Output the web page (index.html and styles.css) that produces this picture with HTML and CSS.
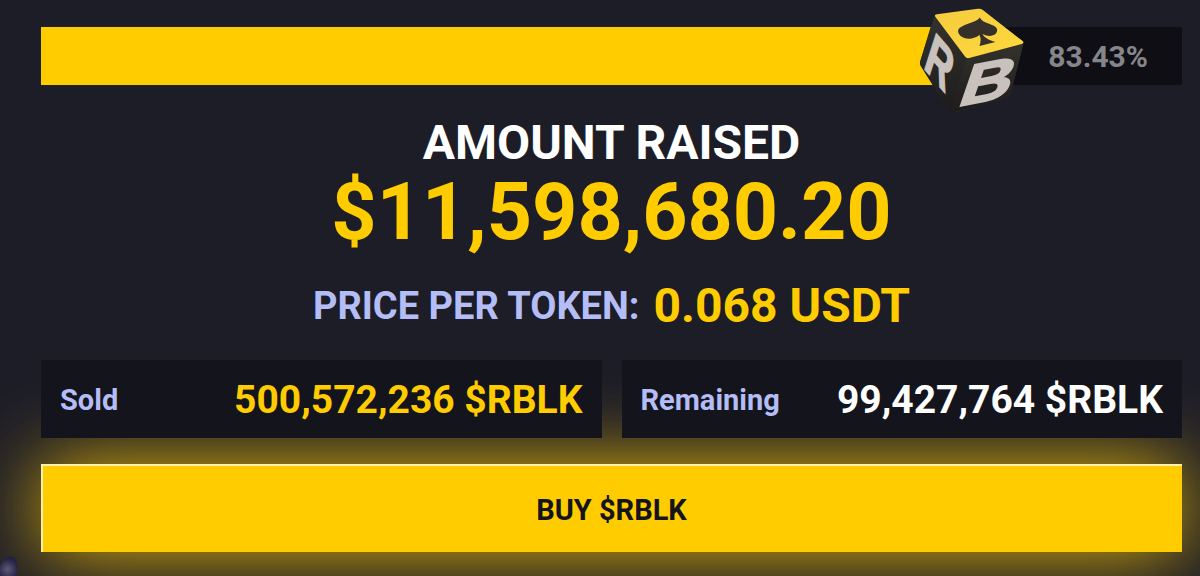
FILE: index.html
```html
<!DOCTYPE html>
<html lang="en">
<head>
  <meta charset="UTF-8">
  <meta name="viewport" content="width=device-width, initial-scale=1">
  <title>Buy $RBLK</title>
  <link rel="stylesheet" href="styles.css">
</head>
<body>
  <main class="presale">
    <div class="progress">
      <div class="progress-fill" style="width: 83.43%">
        <svg class="dice" viewBox="54 20 322 324" aria-hidden="true">
          <defs>
            <linearGradient id="top" x1="0" y1="0" x2="1" y2="1">
              <stop offset="0" stop-color="#f5cc3e"/>
              <stop offset="1" stop-color="#ffd83c"/>
            </linearGradient>
            <linearGradient id="side" x1="0" y1="0" x2="0" y2="1">
              <stop offset="0" stop-color="#34322d"/>
              <stop offset="1" stop-color="#1d1c1b"/>
            </linearGradient>
          </defs>
          <path d="M108 42 L200 172 L372 128 L332 284 Q329 291 320 294 L160 338 Q152 340 147 332 L62 196 Q59 190 61 182 L101 50 Z" fill="#282723"/>
          <path d="M104 48 L200 174 L155 337 Q150 338 146 330 L62 196 Q59 190 61 182 Z" fill="url(#side)"/>
          <path d="M200 174 L371 129 L332 284 Q329 291 320 294 L156 338 Z" fill="url(#side)"/>
          <path d="M111 41 L234 25 Q242 23 248 28 L369 122 Q375 128 366 131 L208 173 Q200 175 196 169 L106 49 Q102 42 111 41 Z" fill="url(#top)"/>
          <path d="M240 51 C229 68 184 70 175 88 C170 108 206 128 239 104 Q246 119 239 137 L287 125 C268 119 255 113 248 101 C273 114 295 103 292 86 C286 69 247 70 240 51 Z" fill="#35312a"/>
          <text class="dice-letter" transform="matrix(.95 1.1 -.5 1.56 68 200)">R</text>
          <text class="dice-letter" transform="matrix(2.16 -.42 -.62 1.8 168 320)">B</text>
        </svg>
      </div>
      <span class="progress-value">83.43%</span>
    </div>

    <h1 class="raised-title">AMOUNT RAISED</h1>
    <p class="raised-amount">$11,598,680.20</p>

    <p class="price">
      <span class="price-label">PRICE PER TOKEN:</span>
      <span class="price-value">0.068 USDT</span>
    </p>

    <dl class="stats">
      <div class="stat">
        <dt>Sold</dt>
        <dd class="sold">500,572,236 $RBLK</dd>
      </div>
      <div class="stat">
        <dt>Remaining</dt>
        <dd>99,427,764 $RBLK</dd>
      </div>
    </dl>

    <button class="buy" type="button">BUY $RBLK</button>
  </main>
  <div class="orb"></div>
</body>
</html>
```
FILE: styles.css
```css
* {
  box-sizing: border-box;
}

body {
  margin: 0;
  background-color: #1d1d28;
  color: white;
  font-family: Roboto, Arial, sans-serif;
  font-weight: 700;
  overflow: hidden;
}

.presale {
  padding: 27px 18px 24px 41px;
  text-align: center;
}

.progress {
  position: relative;
  display: flex;
  align-items: center;
  justify-content: flex-end;
  height: 58px;
  padding-right: 34px;
  background-color: #0f0e14;
}

.progress-fill {
  position: absolute;
  top: 0;
  left: 0;
  height: 100%;
  background: linear-gradient(to right, #ffcc00 94%, transparent 94%);
}

.dice {
  position: absolute;
  top: -20px;
  right: -32px;
  width: 107px;
  height: 108px;
  overflow: visible;
}

.dice-letter {
  font-family: "Liberation Sans", Arial, sans-serif;
  font-size: 100px;
  font-weight: 700;
  fill: #c9c2bc;
  stroke: #c9c2bc;
  stroke-width: 3px;
}

.progress-value {
  color: #85858a;
  font-size: 30px;
}

.raised-title {
  margin: 30px 0 0;
  font-size: 48px;
  line-height: 56px;
}

.raised-amount {
  margin: 0;
  color: #ffcc00;
  font-size: 79px;
  line-height: 82px;
}

.price {
  display: flex;
  align-items: center;
  justify-content: center;
  gap: 14px;
  margin: 25px 0 26px;
  line-height: 56px;
}

.price-label {
  color: #b4bdf5;
  font-size: 38px;
}

.price-value {
  color: #ffcc00;
  font-size: 48px;
}

/* sits above the glow of the buy button */
.stats {
  position: relative;
  z-index: 1;
  display: grid;
  grid-template-columns: 1fr 1fr;
  gap: 20px;
  margin: 0 0 26px;
}

.stat {
  display: flex;
  align-items: center;
  justify-content: space-between;
  height: 78px;
  padding: 2px 19px 0;
  background-color: #14141c;
}

.stat dt {
  color: #b4bdf5;
  font-size: 29px;
}

.stat dd {
  margin: 0;
  font-size: 39px;
}

.stat .sold {
  color: #ffcc00;
}

.buy {
  display: block;
  width: 100%;
  height: 88px;
  padding: 4px 0 0;
  border: 0;
  background-color: #ffcc00;
  box-shadow: 0 0 80px rgba(255, 204, 0, 0.9), inset 2px 2px 0 #fff0ac;
  color: #14141c;
  font: inherit;
  font-size: 29px;
  cursor: pointer;
}

.orb {
  position: absolute;
  bottom: -10px;
  left: -1px;
  width: 18px;
  height: 30px;
  border-radius: 50%;
  background: radial-gradient(circle at 45% 45%, #5b5a78, #2b2547 50%, #17122b 90%);
  transform: rotate(14deg);
}
```
